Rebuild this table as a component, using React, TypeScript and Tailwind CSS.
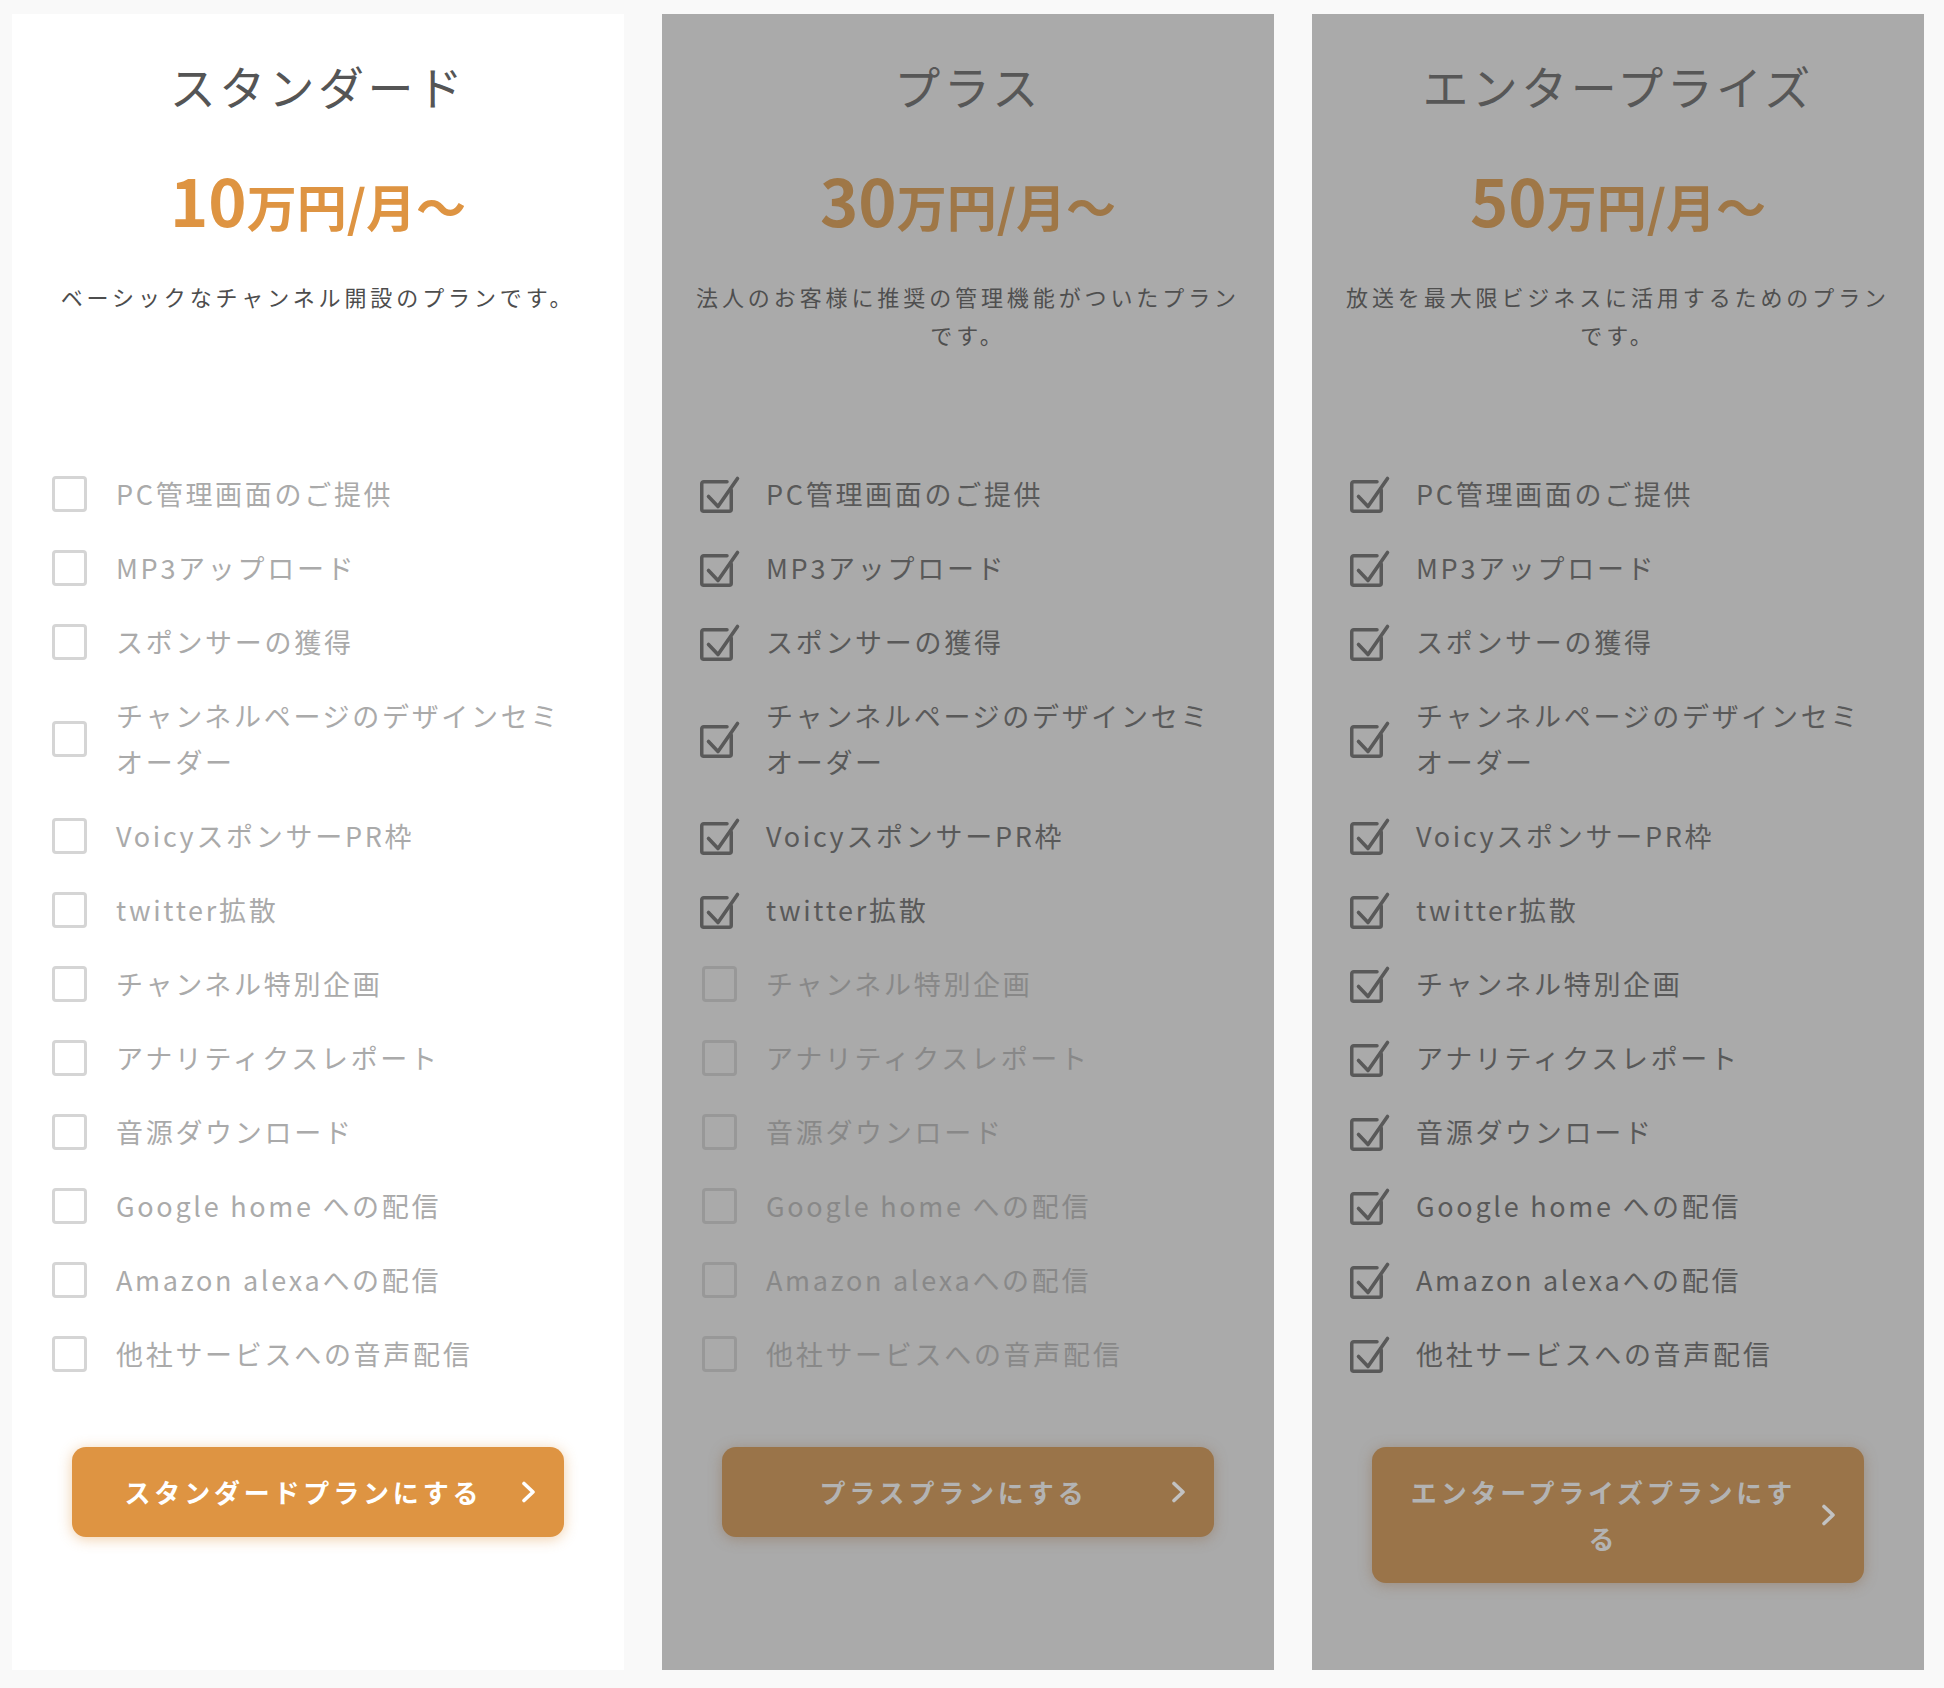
import type { ReactNode } from 'react';

type Plan = {
  name: string;
  amount: string;
  desc: string;
  cta: string;
  checked: number; // number of features included
  dim: boolean;
};

const FEATURES: string[] = [
  'PC管理画面のご提供',
  'MP3アップロード',
  'スポンサーの獲得',
  'チャンネルページのデザインセミオーダー',
  'VoicyスポンサーPR枠',
  'twitter拡散',
  'チャンネル特別企画',
  'アナリティクスレポート',
  '音源ダウンロード',
  'Google home への配信',
  'Amazon alexaへの配信',
  '他社サービスへの音声配信',
];

const PLANS: Plan[] = [
  { name: 'スタンダード', amount: '10', desc: 'ベーシックなチャンネル開設のプランです。', cta: 'スタンダードプランにする', checked: 0, dim: false },
  { name: 'プラス', amount: '30', desc: '法人のお客様に推奨の管理機能がついたプランです。', cta: 'プラスプランにする', checked: 6, dim: true },
  { name: 'エンタープライズ', amount: '50', desc: '放送を最大限ビジネスに活用するためのプランです。', cta: 'エンタープライズプランにする', checked: 12, dim: true },
];

function CheckedIcon({ color }: { color: string }) {
  return (
    <svg className="absolute left-[-2px] top-0 overflow-visible" width="40" height="38" viewBox="0 0 40 38" fill="none">
      <path
        d="M31.25 14 V33.25 a2 2 0 0 1 -2 2 H3.75 a2 2 0 0 1 -2 -2 V7.75 a2 2 0 0 1 2 -2 H27"
        stroke={color}
        strokeWidth="3.5"
        strokeLinecap="round"
        strokeLinejoin="round"
      />
      <path d="M8.5 20.5 L18 30.5 L37.5 2.5" stroke={color} strokeWidth="3.6" strokeLinecap="round" strokeLinejoin="round" />
    </svg>
  );
}

function Feature({ label, on, dim }: { label: string; on: boolean; dim: boolean }) {
  let box: ReactNode;
  let text = 'text-[#aaaaaa]';
  if (on) {
    box = <CheckedIcon color="#595959" />;
    text = 'text-[#595959]';
  } else {
    box = (
      <span
        className={`block w-full h-full rounded-[4px] border-[3px] ${dim ? 'border-[#989898]' : 'border-[#d5d5d5]'}`}
      />
    );
    text = dim ? 'text-[#888888]' : 'text-[#aaaaaa]';
  }
  return (
    <li className="flex items-center">
      <span className="relative shrink-0 w-[35px] h-[36px]">{box}</span>
      <span className={`ml-[29px] text-[27px] leading-[46px] tracking-[2.7px] ${text}`}>{label}</span>
    </li>
  );
}

function Chevron({ color }: { color: string }) {
  return (
    <svg className="shrink-0 ml-[22px]" width="15" height="22" viewBox="0 0 15 22" fill="none">
      <path d="M3 2.5 L12 11 L3 19.5" stroke={color} strokeWidth="3.6" strokeLinecap="round" strokeLinejoin="round" />
    </svg>
  );
}

function PlanCard({ plan }: { plan: Plan }) {
  const { dim } = plan;
  return (
    <div
      className={`w-[612px] shrink-0 flex flex-col px-[30px] pt-[41px] pb-[87px] ${dim ? 'bg-[#aaaaaa]' : 'bg-white'}`}
    >
      <h2 className={`text-center text-[46px] leading-[60px] tracking-[3.4px] font-normal ${dim ? 'text-[#575757]' : 'text-[#555555]'}`}>
        {plan.name}
      </h2>

      <div className={`mt-[44px] h-[80px] leading-[80px] text-center font-bold ${dim ? 'text-[#9f7747]' : 'text-[#de9442]'}`}>
        <span className="text-[65px]">{plan.amount}</span>
        <span className="text-[50px]">万円/月〜</span>
      </div>

      <p className={`mt-[38px] h-[194px] text-center text-[22px] leading-[38px] tracking-[3.9px] ${dim ? 'text-[#4f4f4f]' : 'text-[#4d4d4d]'}`}>
        {plan.desc}
      </p>

      <ul className="flex flex-col gap-[28px] px-[10px]">
        {FEATURES.map((f, i) => (
          <Feature key={f} label={f} on={i < plan.checked} dim={dim} />
        ))}
      </ul>

      <button
        type="button"
        className={`mt-[70px] mx-[30px] flex items-center rounded-[14px] pl-[36px] pr-[28px] py-[22px] ${
          dim
            ? 'bg-[#9a7449] shadow-[0_2px_14px_rgba(140,105,70,0.45)]'
            : 'bg-[#de9442] shadow-[0_2px_14px_rgba(222,148,66,0.45)]'
        }`}
      >
        <span
          className={`flex-1 text-center text-[26px] leading-[46px] tracking-[3.8px] font-bold ${dim ? 'text-[#b3b3b3]' : 'text-white'}`}
        >
          {plan.cta}
        </span>
        <Chevron color={dim ? '#c2c2c2' : '#ffffff'} />
      </button>
    </div>
  );
}

export default function App() {
  return (
    <div className="min-h-screen bg-[#f9f9f9] font-['Noto_Sans_CJK_JP','Noto_Sans',sans-serif]">
      <div className="flex items-stretch gap-[38px] pl-[12px] pr-[20px] pt-[14px] pb-[18px]">
        {PLANS.map((p) => (
          <PlanCard key={p.name} plan={p} />
        ))}
      </div>
    </div>
  );
}
